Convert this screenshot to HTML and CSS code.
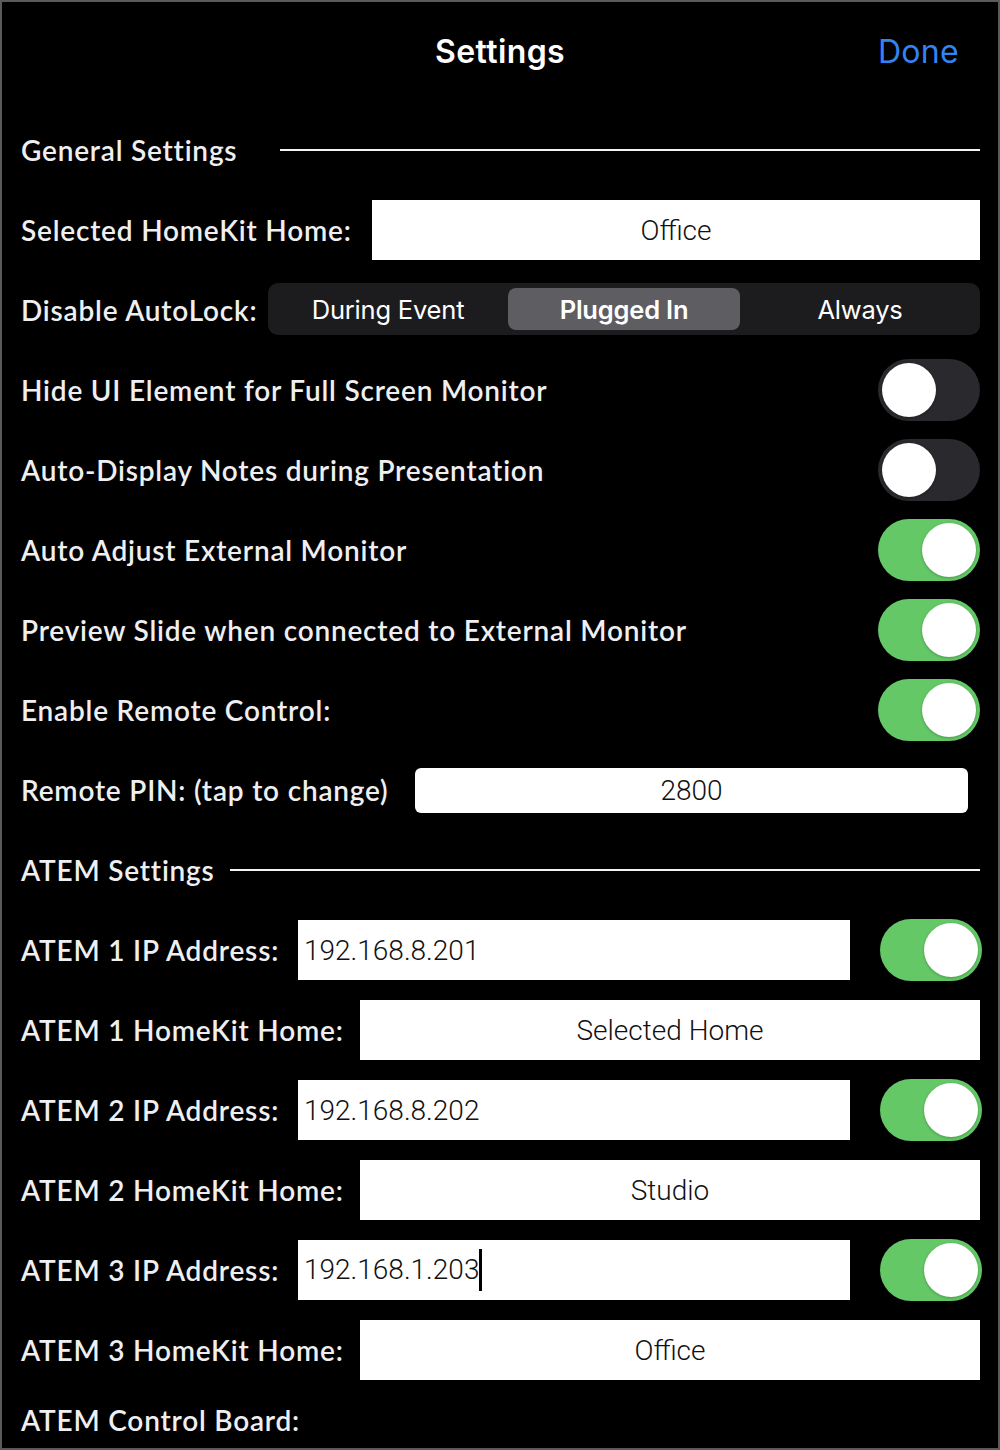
FILE: index.html
```html
<!DOCTYPE html>
<html lang="en">
<head>
<meta charset="utf-8">
<title>Settings</title>
<link rel="stylesheet" href="styles.css">
</head>
<body>
<div class="screen">
  <header class="nav">
    <div></div>
    <h1 class="nav-title">Settings</h1>
    <div class="nav-done">Done</div>
  </header>

  <section class="list">
    <div class="row section">
      <span class="label">General Settings</span>
      <span class="rule rule-general"></span>
    </div>

    <div class="row">
      <span class="label">Selected HomeKit Home:</span>
      <div class="box box-home">Office</div>
    </div>

    <div class="row">
      <span class="label">Disable AutoLock:</span>
      <div class="segmented">
        <div class="seg">During Event</div>
        <div class="seg seg-on">Plugged In</div>
        <div class="seg">Always</div>
      </div>
    </div>

    <div class="row">
      <span class="label">Hide UI Element for Full Screen Monitor</span>
      <div class="toggle"><span class="knob"></span></div>
    </div>

    <div class="row">
      <span class="label">Auto-Display Notes during Presentation</span>
      <div class="toggle"><span class="knob"></span></div>
    </div>

    <div class="row">
      <span class="label">Auto Adjust External Monitor</span>
      <div class="toggle on"><span class="knob"></span></div>
    </div>

    <div class="row">
      <span class="label">Preview Slide when connected to External Monitor</span>
      <div class="toggle on"><span class="knob"></span></div>
    </div>

    <div class="row">
      <span class="label">Enable Remote Control:</span>
      <div class="toggle on"><span class="knob"></span></div>
    </div>

    <div class="row">
      <span class="label">Remote PIN: (tap to change)</span>
      <div class="box box-pin">2800</div>
    </div>

    <div class="row section">
      <span class="label">ATEM Settings</span>
      <span class="rule rule-atem"></span>
    </div>

    <div class="row">
      <span class="label">ATEM 1 IP Address:</span>
      <div class="ip-group">
        <div class="box box-ip">192.168.8.201</div>
        <div class="toggle on"><span class="knob"></span></div>
      </div>
    </div>

    <div class="row">
      <span class="label">ATEM 1 HomeKit Home:</span>
      <div class="box box-atem-home">Selected Home</div>
    </div>

    <div class="row">
      <span class="label">ATEM 2 IP Address:</span>
      <div class="ip-group">
        <div class="box box-ip">192.168.8.202</div>
        <div class="toggle on"><span class="knob"></span></div>
      </div>
    </div>

    <div class="row">
      <span class="label">ATEM 2 HomeKit Home:</span>
      <div class="box box-atem-home">Studio</div>
    </div>

    <div class="row">
      <span class="label">ATEM 3 IP Address:</span>
      <div class="ip-group">
        <div class="box box-ip"><span class="caret-text">192.168.1.203</span></div>
        <div class="toggle on"><span class="knob"></span></div>
      </div>
    </div>

    <div class="row">
      <span class="label">ATEM 3 HomeKit Home:</span>
      <div class="box box-atem-home">Office</div>
    </div>

    <div class="row row-last">
      <span class="label">ATEM Control Board:</span>
    </div>
  </section>
</div>
</body>
</html>
```

FILE: styles.css
```css
html, body {
  margin: 0;
  padding: 0;
  background: #000;
}

.screen {
  box-sizing: border-box;
  width: 1000px;
  height: 1450px;
  overflow: hidden;
  border: 2px solid #5a5a5a;
  background: #000;
  color: #efeff2;
}

.nav {
  display: grid;
  grid-template-columns: 1fr auto 1fr;
  align-items: center;
  height: 98px;
  padding: 0 39px;
  box-sizing: border-box;
}

.nav-title {
  margin: 0;
  font-family: Inter, "Liberation Sans", sans-serif;
  font-weight: 600;
  font-size: 32px;
  color: #fff;
  letter-spacing: 0.4px;
}

.nav-done {
  justify-self: end;
  font-family: Inter, "Liberation Sans", sans-serif;
  font-weight: 400;
  font-size: 32px;
  letter-spacing: 0.3px;
  color: #3483f3;
}

.list {
  display: flex;
  flex-direction: column;
  padding: 10px 18px 0 19px;
}

.row {
  display: flex;
  align-items: center;
  height: 80px;
  flex: none;
}

.row-last {
  height: 60px;
}

.label {
  flex: 1;
  font-family: Lato, "Open Sans", sans-serif;
  font-weight: 600;
  font-size: 28px;
  letter-spacing: 0.8px;
  white-space: nowrap;
  color: #efeff2;
}

.rule {
  height: 2px;
  background: #f4f4f4;
}

.rule-general { width: 700px; }
.rule-atem { width: 750px; }

.box {
  box-sizing: border-box;
  background: #fff;
  color: #111;
  height: 60px;
  display: flex;
  align-items: center;
  justify-content: center;
  font-family: Roboto, "Liberation Sans", sans-serif;
  font-weight: 300;
  font-size: 28px;
}

.box-home { width: 608px; }

.box-pin {
  width: 553px;
  height: 45px;
  border-radius: 6px;
  margin-right: 12px;
}

.box-atem-home { width: 620px; }

.box-ip {
  width: 552px;
  justify-content: flex-start;
  padding-left: 6px;
}

.caret-text {
  border-right: 3px solid #000;
  line-height: 42px;
}

.ip-group {
  display: flex;
  align-items: center;
  gap: 30px;
  margin-right: -2px;
}

.segmented {
  box-sizing: border-box;
  width: 712px;
  height: 52px;
  margin-top: -2px;
  border-radius: 10px;
  background: #1c1c1f;
  display: flex;
  padding: 5px 4px;
  gap: 4px;
}

.seg {
  flex: 1;
  display: flex;
  align-items: center;
  justify-content: center;
  border-radius: 8px;
  font-family: Inter, "Liberation Sans", sans-serif;
  font-size: 25.5px;
  font-weight: 400;
  color: #fff;
  letter-spacing: -0.2px;
}

.seg-on {
  background: #5d5d62;
  font-weight: 600;
}

.toggle {
  box-sizing: border-box;
  width: 102px;
  height: 62px;
  border-radius: 31px;
  background: #2a2a2e;
  padding: 4px;
  display: flex;
  justify-content: flex-start;
  flex: none;
}

.toggle.on {
  background: #64c866;
  justify-content: flex-end;
}

.knob {
  width: 54px;
  height: 54px;
  border-radius: 50%;
  background: #fff;
  box-shadow: 0 1px 3px rgba(0, 0, 0, 0.25);
}
```
